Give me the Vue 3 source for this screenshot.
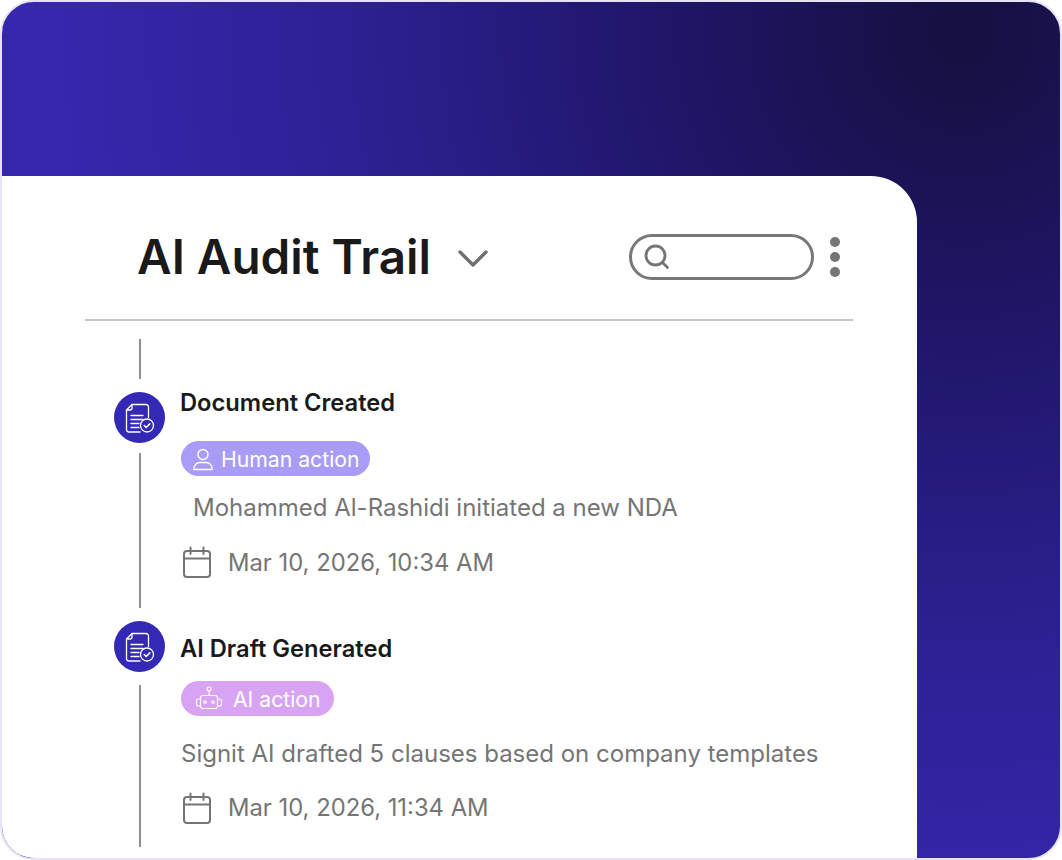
<template>
  <div class="frame">
    <section class="card">
      <header class="head">
        <div class="title-wrap">
          <h1>AI Audit Trail</h1>
          <svg class="chevron" width="32" height="20" viewBox="0 0 32 20" fill="none">
            <path d="M3 4l13 13L29 4" stroke="#6f6f6f" stroke-width="3.4" stroke-linecap="round" stroke-linejoin="round" />
          </svg>
        </div>
        <div class="tools">
          <div class="search">
            <svg width="28" height="28" viewBox="0 0 28 28" fill="none">
              <circle cx="12.5" cy="12.5" r="9.5" stroke="#757575" stroke-width="2.8" />
              <path d="M19.5 19.5l5 5" stroke="#757575" stroke-width="2.8" stroke-linecap="round" />
            </svg>
          </div>
          <div class="dots"><i></i><i></i><i></i></div>
        </div>
      </header>

      <div class="timeline">
        <div class="stub"></div>
        <article v-for="item in events" :key="item.title" class="event" :class="item.kind">
          <div class="rail">
            <div class="node">
              <svg width="30" height="30" viewBox="0 0 30 30" fill="none" stroke="#fff" stroke-width="1.3" stroke-linecap="round" stroke-linejoin="round">
                <path d="M23.500 14.500V4A2.500 2.500 0 0 0 21 1.500H7L1.500 7v19.500A2.500 2.500 0 0 0 4 29h11" />
                <path d="M7 1.500V5a2 2 0 0 1-2 2H1.500" />
                <path d="M6 12.500h12M6 16.500h12M6 20.500h8M6 24.500h8" />
                <circle cx="22" cy="22.500" r="6.500" />
                <path d="M19.200 22.500l2 2 3.600-3.600" stroke-width="1.500" />
              </svg>
            </div>
            <div class="line"></div>
          </div>
          <div class="body">
            <h3>{{ item.title }}</h3>
            <span class="badge">
              <svg v-if="item.kind === 'human'" width="24" height="24" viewBox="0 0 24 24" fill="none" stroke="#fff" stroke-width="1.400">
                <circle cx="12" cy="7.500" r="5" />
                <path d="M2.800 22.500c0-4.500 3-7 6-7h6.400c3 0 6 2.500 6 7z" stroke-linejoin="round" />
              </svg>
              <svg v-else width="28" height="28" viewBox="0 0 28 28" fill="none" stroke="#fff" stroke-width="1.100" stroke-linecap="round" stroke-linejoin="round">
                <circle cx="14" cy="4" r="2" />
                <path d="M14 6v4.500" />
                <rect x="5.500" y="10.500" width="17" height="13" rx="2.500" />
                <path d="M5.500 14H3.500a2 2 0 0 0-2 2v3a2 2 0 0 0 2 2h2M22.500 14h2a2 2 0 0 1 2 2v3a2 2 0 0 1-2 2h-2" />
                <circle cx="10" cy="17" r="1.300" />
                <circle cx="18" cy="17" r="1.300" />
              </svg>
              {{ item.badge }}
            </span>
            <p class="desc">{{ item.text }}</p>
            <div class="date">
              <svg width="30" height="32" viewBox="0 0 30 32" fill="none" stroke="#757575" stroke-width="2" stroke-linecap="round" stroke-linejoin="round">
                <rect x="2" y="5" width="26" height="26" rx="3" />
                <path d="M2 12.500h26M8.500 1.500V8M21.500 1.500V8" />
              </svg>
              <span>{{ item.date }}</span>
            </div>
          </div>
        </article>
      </div>
    </section>
  </div>
</template>

<script setup>
const events = [
  {
    kind: "human",
    title: "Document Created",
    badge: "Human action",
    text: "Mohammed Al-Rashidi initiated a new NDA",
    date: "Mar 10, 2026, 10:34 AM"
  },
  {
    kind: "ai",
    title: "AI Draft Generated",
    badge: "AI action",
    text: "Signit AI drafted 5 clauses based on company templates",
    date: "Mar 10, 2026, 11:34 AM"
  }
]
</script>

<style scoped>
.frame {
  box-sizing: border-box;
  width: 1062px;
  height: 860px;
  padding-top: 174px;
  overflow: hidden;
  border: 2px solid #e7e2f6;
  border-radius: 34px;
  background: radial-gradient(circle 1000px at 960px 30px, #15103f 0%, #1f1668 30%, #2e2196 64%, #3727ae 92%);
  font-family: Inter, "Liberation Sans", sans-serif;
}

.card {
  box-sizing: border-box;
  width: 915px;
  height: 684px;
  padding-left: 83px;
  overflow: hidden;
  border-top-right-radius: 46px;
  background: #fff;
}

.head {
  box-sizing: border-box;
  display: flex;
  align-items: center;
  justify-content: space-between;
  width: 768px;
  height: 145px;
  padding: 18px 13px 0 52px;
  border-bottom: 2px solid #c6c6c6;
}

.title-wrap {
  display: flex;
  align-items: center;
  gap: 26px;
}

h1 {
  margin: 0;
  color: #1a1a1a;
  font-size: 47.6px;
  font-weight: 600;
}

.chevron {
  margin-top: 2px;
}

.tools {
  display: flex;
  align-items: center;
  gap: 16px;
}

.search {
  box-sizing: border-box;
  display: flex;
  align-items: center;
  width: 185px;
  height: 46px;
  padding-left: 11px;
  border: 3px solid #787878;
  border-radius: 23px;
}

.dots {
  display: flex;
  flex-direction: column;
  gap: 5px;
}

.dots i {
  width: 10px;
  height: 10px;
  border-radius: 50%;
  background: #757575;
}

.timeline {
  margin-left: 29px;
}

.stub {
  width: 2px;
  height: 40px;
  margin: 18px 0 13px 24.500px;
  background: #8e8e8e;
}

.event {
  display: flex;
  gap: 16px;
  height: 229px;
}

.event.ai {
  height: 226px;
}

.rail {
  display: flex;
  flex-direction: column;
  align-items: center;
  flex: 0 0 51px;
  padding-bottom: 13px;
}

.ai .rail {
  padding-bottom: 0;
}

.node {
  display: flex;
  align-items: center;
  justify-content: center;
  flex: 0 0 51px;
  width: 51px;
  border-radius: 50%;
  background: #3329b5;
}

.line {
  flex: 1;
  width: 2px;
  margin-top: 10px;
  background: #8e8e8e;
}

.ai .line {
  margin-top: 13px;
}

.body {
  flex: 1;
}

h3 {
  margin: 0 0 0 -1px;
  color: #1a1a1a;
  font-size: 23.700px;
  font-weight: 600;
  line-height: 22px;
}

.badge {
  box-sizing: border-box;
  display: inline-flex;
  align-items: center;
  gap: 6px;
  height: 35px;
  margin-top: 27px;
  padding: 0 10px;
  border-radius: 18px;
  color: #fff;
  background: #a99cf6;
  font-size: 21.200px;
}

.ai .badge {
  margin-top: 21px;
  padding: 0 13px 0 14px;
  gap: 10px;
  background: #d8a3f2;
}

.desc {
  margin: 0;
  padding: 16px 0 0 12px;
  color: #757575;
  font-size: 24px;
  line-height: 32px;
}

.ai .desc {
  padding: 21px 0 0;
}

.date {
  display: flex;
  align-items: center;
  gap: 16px;
  margin-top: 22px;
  padding-left: 1px;
  color: #757575;
  font-size: 23.800px;
}

.ai .date {
  margin-top: 22px;
}

.ai h3 {
  margin-top: 17px;
}
</style>
